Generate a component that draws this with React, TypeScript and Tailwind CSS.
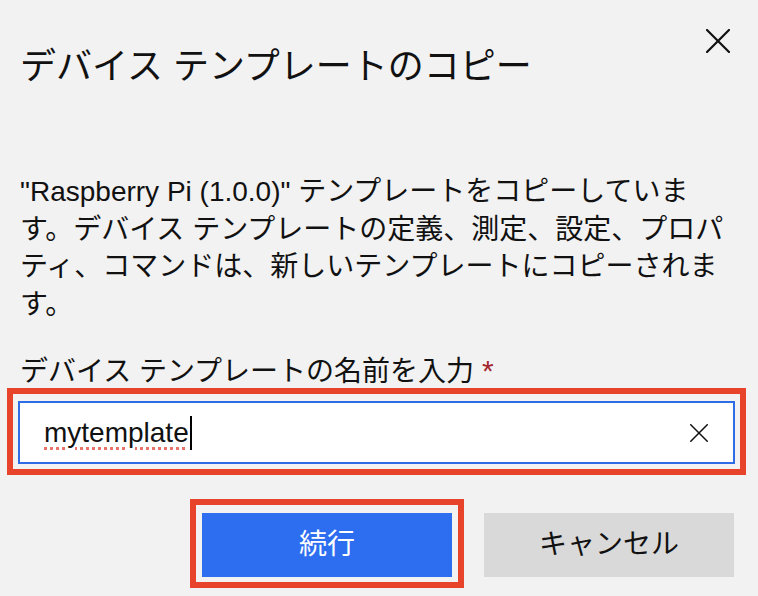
import { FC } from "react";

const CloseIcon: FC<{ size: number; stroke: number }> = ({ size, stroke }) => (
  <svg width={size} height={size} viewBox="0 0 24 24" fill="none">
    <path
      d="M1 1L23 23M23 1L1 23"
      stroke="#111"
      strokeWidth={stroke}
      strokeLinecap="square"
    />
  </svg>
);

const App: FC = () => {
  return (
    <div className="w-[758px] h-[596px] overflow-hidden bg-[#f2f2f2] text-[#111] font-['Liberation_Sans','Noto_Sans_CJK_JP',sans-serif]">
      {/* header */}
      <div className="flex items-start justify-between pl-[20px] pr-[28px]">
        <h1 className="mt-[49px] text-[36px] leading-[36px] font-normal whitespace-nowrap">
          デバイス テンプレートのコピー
        </h1>
        <button className="mt-[29px] w-[24px] h-[24px]">
          <CloseIcon size={24} stroke={2.2} />
        </button>
      </div>

      {/* description */}
      <p className="mt-[88px] px-[20px] text-[28px] leading-[37.5px]">
        "Raspberry Pi (1.0.0)" テンプレートをコピーしています。デバイス
        テンプレートの定義、測定、設定、プロパティ、コマンドは、新しいテンプレートにコピーされます。
      </p>

      {/* field */}
      <label className="block mt-[32px] px-[20px] text-[28px] leading-[32px] whitespace-nowrap">
        デバイス テンプレートの名前を入力 <span className="text-[#a4262c] text-[30px]">*</span>
      </label>
      <div className="ml-[7px] mr-[12px] border-[6px] border-[#e8432b] px-[5px] pt-[7px] pb-[5px]">
        <div className="flex items-center h-[63px] bg-white border-2 border-[#2f6de6] pl-[24px] pr-[25px]">
          <div className="flex items-center flex-1 text-[28px]">
            <span className="underline decoration-dotted decoration-[#e8736b] decoration-[3px] underline-offset-[5px]">
              mytemplate
            </span>
            <span className="ml-[1px] w-[2px] h-[34px] bg-black" />
          </div>
          <CloseIcon size={18} stroke={2} />
        </div>
      </div>

      {/* actions */}
      <div className="flex items-start justify-end mt-[24px] pr-[24px]">
        <div className="border-[6px] border-[#e8432b] px-[6px] pt-[8px] pb-[5px]">
          <button className="flex items-center justify-center w-[250px] h-[64px] bg-[#2d6ef1] text-white text-[28px]">
            続行
          </button>
        </div>
        <button className="flex items-center justify-center ml-[20px] mt-[14px] w-[250px] h-[64px] bg-[#d9d9d9] text-[28px]">
          キャンセル
        </button>
      </div>
    </div>
  );
};

export default App;
